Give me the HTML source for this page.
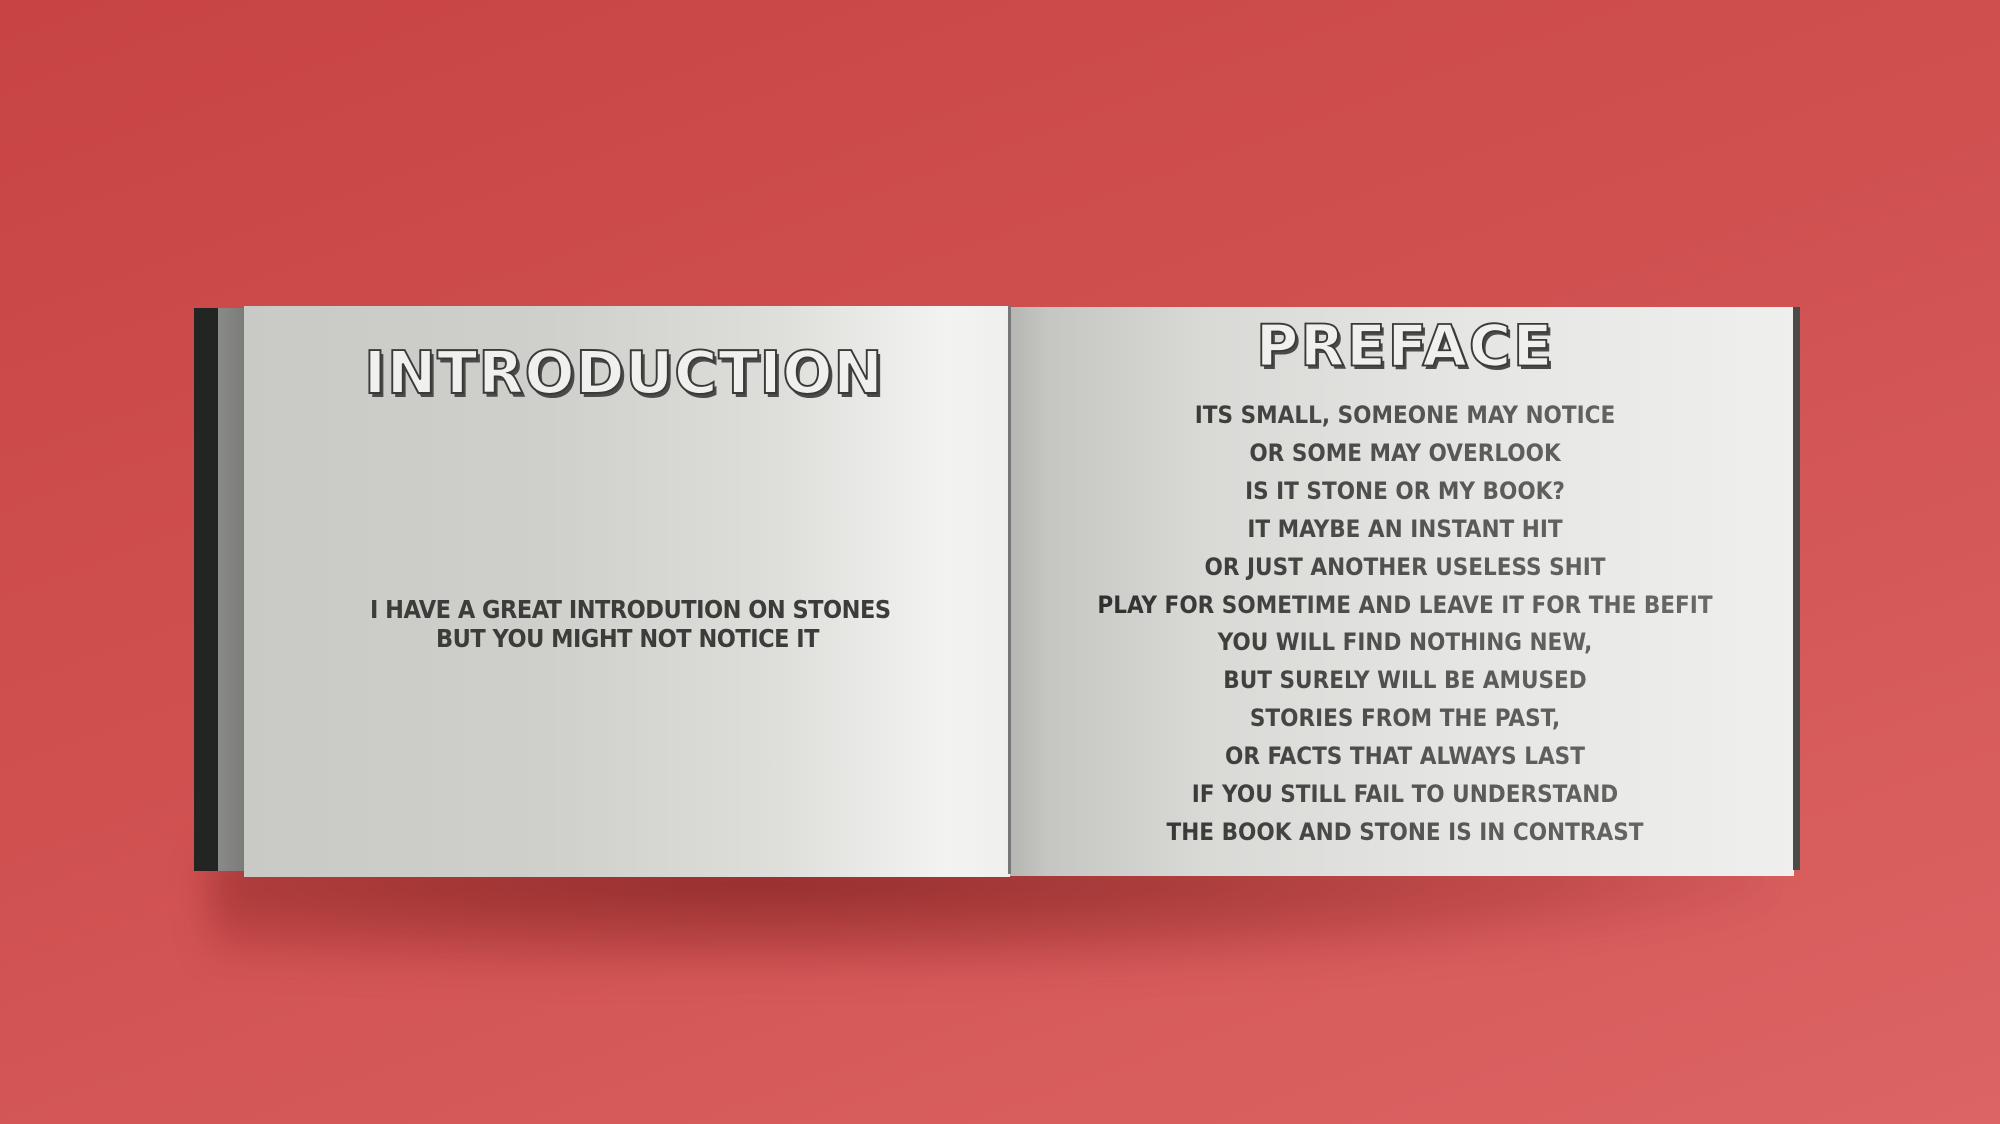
<!DOCTYPE html>
<html><head><meta charset="utf-8"><style>
html,body{margin:0;padding:0}
body{width:2000px;height:1124px;overflow:hidden;position:relative;
background:linear-gradient(160deg,#c84444 0%,#d05050 45%,#dc6464 100%);}
.abs{position:absolute}
.shadow{left:210px;top:850px;width:1560px;height:120px;background:radial-gradient(ellipse at 35% 20%,rgba(90,10,10,.55),rgba(120,20,20,.25) 55%,rgba(0,0,0,0) 75%);filter:blur(18px)}
.spine{left:194px;top:308px;width:26px;height:563px;background:#232522}
.strip{left:218px;top:308px;width:27px;height:563px;background:linear-gradient(90deg,#8a8a88,#7b7b79)}
.lp{left:244px;top:306px;width:766px;height:571px;background:linear-gradient(90deg,#c9c9c5 0%,#cfcfcb 40%,#dededb 70%,#f3f3f1 92%,#efefed 100%)}
.rp{left:1010px;top:307px;width:784px;height:569px;background:linear-gradient(90deg,#b5b5b2 0%,#c6c6c3 5%,#d9d9d6 25%,#e6e6e4 60%,#efefed 100%)}
.redge{left:1793px;top:307px;width:7px;height:563px;background:#4a4a48}
.gut{left:1008px;top:306px;width:3px;height:568px;background:#777}
.title{font-family:"DejaVu Sans","Liberation Sans",sans-serif;font-weight:bold;color:#f0f0ee;-webkit-text-stroke:2px #3a3a38;text-shadow:3px 4px 0 #4a4a48;white-space:nowrap;transform-origin:0 0}
.t{font-family:"DejaVu Sans Condensed","Liberation Sans Narrow","DejaVu Sans",sans-serif;font-weight:bold;white-space:nowrap;text-align:center;color:#4a4a48}
</style></head><body>
<div class="abs shadow"></div>
<div class="abs spine"></div>
<div class="abs strip"></div>
<div class="abs lp"></div>
<div class="abs rp"></div>
<div class="abs gut"></div>
<div class="abs redge"></div>

<div class="abs title" style="left:364px;top:338px;font-size:62px;transform:scale(0.95,0.95);letter-spacing:1px">INTRODUCTION</div>
<div class="abs title" style="left:1256px;top:312px;font-size:62px;transform:scale(0.93,0.92);letter-spacing:2px">PREFACE</div>

<div class="abs t" style="left:370px;top:595px;width:515px;font-size:25px;line-height:29px;color:#3c3c3a;letter-spacing:-0.5px">I HAVE A GREAT INTRODUTION ON STONES<br>BUT YOU MIGHT NOT NOTICE IT</div>

<div class="abs t" style="left:1085px;top:397px;width:640px;font-size:24px;line-height:37.9px;background:linear-gradient(90deg,#2e2e2c,#5a5a58 60%,#6a6a68);-webkit-background-clip:text;background-clip:text;color:transparent">
ITS SMALL, SOMEONE MAY NOTICE<br>
OR SOME MAY OVERLOOK<br>
IS IT STONE OR MY BOOK?<br>
IT MAYBE AN INSTANT HIT<br>
OR JUST ANOTHER USELESS SHIT<br>
PLAY FOR SOMETIME AND LEAVE IT FOR THE BEFIT<br>
YOU WILL FIND NOTHING NEW,<br>
BUT SURELY WILL BE AMUSED<br>
STORIES FROM THE PAST,<br>
OR FACTS THAT ALWAYS LAST<br>
IF YOU STILL FAIL TO UNDERSTAND<br>
THE BOOK AND STONE IS IN CONTRAST</div>
</body></html>
